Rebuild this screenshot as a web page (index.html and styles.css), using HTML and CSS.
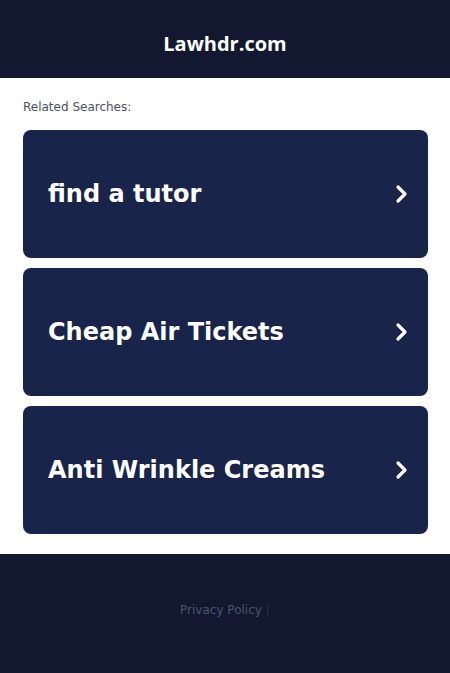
FILE: index.html
```html
<!DOCTYPE html>
<html lang="en">
<head>
    <meta charset="UTF-8">
    <meta name="viewport" content="width=device-width, initial-scale=1.0">
    <title>Lawhdr.com</title>
    <link rel="stylesheet" href="styles.css">
</head>
<body>
    <header class="header">
        <h1 class="site-title">Lawhdr.com</h1>
    </header>
    <main class="content">
        <p class="related">Related Searches:</p>
        <div class="links">
            <a class="link-card" href="#">
                <span>find a tutor</span>
                <svg class="chevron" viewBox="0 0 16 20" width="16" height="20"><path d="M4 3l7 7-7 7" fill="none" stroke="#fff" stroke-width="3.2" stroke-linecap="round" stroke-linejoin="round"/></svg>
            </a>
            <a class="link-card" href="#">
                <span>Cheap Air Tickets</span>
                <svg class="chevron" viewBox="0 0 16 20" width="16" height="20"><path d="M4 3l7 7-7 7" fill="none" stroke="#fff" stroke-width="3.2" stroke-linecap="round" stroke-linejoin="round"/></svg>
            </a>
            <a class="link-card" href="#">
                <span>Anti Wrinkle Creams</span>
                <svg class="chevron" viewBox="0 0 16 20" width="16" height="20"><path d="M4 3l7 7-7 7" fill="none" stroke="#fff" stroke-width="3.2" stroke-linecap="round" stroke-linejoin="round"/></svg>
            </a>
        </div>
    </main>
    <footer class="footer">
        <a class="footer-link" href="#">Privacy Policy</a>
        <span class="sep">|</span>
    </footer>
</body>
</html>
```

FILE: styles.css
```css
body {
    font-family: "DejaVu Sans", sans-serif;
    margin: 0;
    padding: 0;
    background-color: #111830;
}
.header {
    background-color: #111830;
    height: 78px;
    display: flex;
    justify-content: center;
    align-items: center;
}
.site-title {
    margin: 0;
    color: #fff;
    font-family: "Open Sans", sans-serif;
    font-size: 20px;
    font-weight: 700;
    padding-top: 8px;
}
.content {
    background: #fff;
    padding: 22px 22px 20px 23px;
}
.related {
    margin: 0 0 16px;
    font-size: 12px;
    color: #4b5563;
}
.links {
    display: flex;
    flex-direction: column;
    gap: 10px;
}
.link-card {
    display: flex;
    justify-content: space-between;
    align-items: center;
    height: 128px;
    padding: 0 18px 0 25px;
    background-color: #18244a;
    border-radius: 8px;
    color: #fff;
    font-size: 24px;
    font-weight: bold;
    text-decoration: none;
}
.footer {
    height: 119px;
    box-sizing: border-box;
    display: flex;
    justify-content: center;
    align-items: flex-start;
    gap: 4px;
    font-size: 12px;
    padding-top: 49px;
}
.footer-link {
    color: #4b5568;
    text-decoration: none;
}
.sep {
    color: #2a3246;
}
```
